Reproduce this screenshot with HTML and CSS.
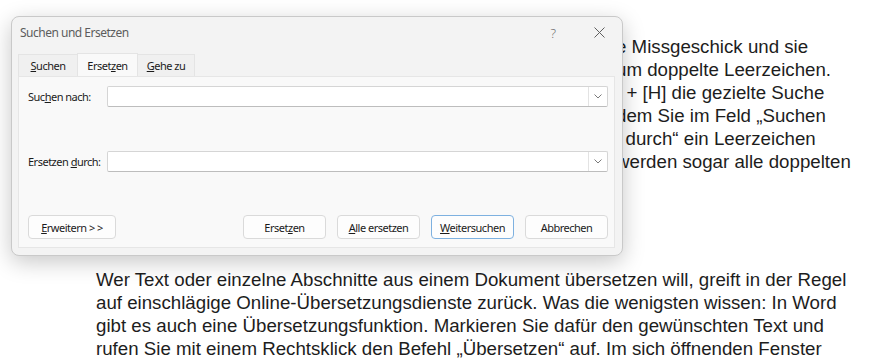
FILE: index.html
```html
<!DOCTYPE html>
<html lang="de">
<head>
    <meta charset="UTF-8">
    <meta name="viewport" content="width=device-width, initial-scale=1.0">
    <title>Suchen und Ersetzen</title>
    <link rel="stylesheet" href="styles.css">
</head>
<body>
    <!-- Dokument im Hintergrund -->
    <div class="doc">
        <p class="para para-top">
            <span class="line"><span class="cut">Wer viel tippt, kennt das ärgerlich</span>e Missgeschick und sie</span>
            <span class="line"><span class="cut">finden sich im ganzen Dokument, z</span>um doppelte Leerzeichen.</span>
            <span class="line"><span class="cut">Abhilfe schafft mit [Strg</span>] + [H] die gezielte Suche</span>
            <span class="line"><span class="cut">nach diesen Stellen, in</span>dem Sie im Feld „Suchen</span>
            <span class="line"><span class="cut cut-short">nach“ und im Feld „Ersetze</span>n durch“ ein Leerzeichen</span>
            <span class="line"><span class="cut">eingeben. So w</span>werden sogar alle doppelten</span>
        </p>
        <p class="para">
            Wer Text oder einzelne Abschnitte aus einem Dokument übersetzen will, greift in der Regel<br>
            auf einschlägige Online-Übersetzungsdienste zurück. Was die wenigsten wissen: In Word<br>
            gibt es auch eine Übersetzungsfunktion. Markieren Sie dafür den gewünschten Text und<br>
            rufen Sie mit einem Rechtsklick den Befehl „Übersetzen“ auf. Im sich öffnenden Fenster
        </p>
    </div>

    <!-- Dialog -->
    <div class="dialog">
        <div class="titlebar">
            <span class="title">Suchen und Ersetzen</span>
            <span class="tb-btn help">?</span>
            <span class="tb-btn close">
                <svg width="11" height="11" viewBox="0 0 11 11"><path d="M0.5 0.5 L10.5 10.5 M10.5 0.5 L0.5 10.5" stroke="#5f5f5f" stroke-width="1" fill="none"/></svg>
            </span>
        </div>

        <div class="tabs">
            <span class="tab"><u>S</u>uchen</span>
            <span class="tab active">Erset<u>z</u>en</span>
            <span class="tab"><u>G</u>ehe zu</span>
        </div>

        <div class="panel">
            <div class="field-row">
                <label class="field-label">Suc<u>h</u>en nach:</label>
                <div class="combo">
                    <span class="combo-arrow">
                        <svg width="8" height="5" viewBox="0 0 8 5"><path d="M0.5 0.5 L4 4 L7.5 0.5" stroke="#7a7a7a" stroke-width="1" fill="none"/></svg>
                    </span>
                </div>
            </div>
            <div class="field-row second">
                <label class="field-label">Ersetzen <u>d</u>urch:</label>
                <div class="combo">
                    <span class="combo-arrow">
                        <svg width="8" height="5" viewBox="0 0 8 5"><path d="M0.5 0.5 L4 4 L7.5 0.5" stroke="#7a7a7a" stroke-width="1" fill="none"/></svg>
                    </span>
                </div>
            </div>
            <div class="button-row">
                <button class="btn btn-more"><u>E</u>rweitern &gt; &gt;</button>
                <div class="btn-group">
                    <button class="btn">Erset<u>z</u>en</button>
                    <button class="btn"><u>A</u>lle ersetzen</button>
                    <button class="btn btn-default"><u>W</u>eitersuchen</button>
                    <button class="btn">Abbrechen</button>
                </div>
            </div>
        </div>
    </div>
</body>
</html>
```

FILE: styles.css
```css
body, html {
    margin: 0;
    padding: 0;
    width: 100%;
    height: 100%;
    background-color: #fff;
    overflow: hidden;
}

.doc {
    padding: 35px 0 0 96px;
    font-family: "Liberation Sans", Arial, sans-serif;
    font-size: 18.7px;
    line-height: 23px;
    color: #1d1d1d;
}
.para {
    margin: 0;
    white-space: nowrap;
}
.para-top {
    margin-bottom: 95px;
}
.line {
    display: block;
}
.cut {
    display: inline-block;
    vertical-align: top;
    width: 520px;
    overflow: hidden;
    text-align: right;
    color: transparent;
}
.cut-short { width: 514px; }

.dialog {
    position: absolute;
    left: 11px;
    top: 16px;
    width: 612px;
    height: 240px;
    box-sizing: border-box;
    background-color: #f3f3f3;
    border: 1px solid #c9c9c9;
    border-radius: 8px;
    box-shadow: 0 6px 22px rgba(0, 0, 0, 0.22);
    font-family: "Noto Sans", sans-serif;
    font-size: 11px;
    letter-spacing: -0.5px;
    color: #1b1b1b;
}

.titlebar {
    height: 31px;
    padding: 0 0 6px 8px;
    display: flex;
    align-items: center;
}
.title {
    flex: 1;
    font-size: 12px;
    color: #5c5c5c;
}
.tb-btn {
    width: 46px;
    text-align: center;
    color: #6a6a6a;
}
.help {
    font-size: 13px;
    font-weight: 300;
    padding-left: 3px;
}
.close {
    display: flex;
    justify-content: center;
    align-items: center;
}

.tabs {
    display: flex;
    margin-left: 6px;
    height: 22px;
    align-items: flex-end;
}
.tab {
    height: 22px;
    box-sizing: border-box;
    padding-top: 3px;
    text-align: center;
    background-color: #f0f0f0;
    border: 1px solid #e4e4e4;
    border-bottom: none;
}
.tab:nth-child(1) { width: 59px; border-right: none; }
.tab:nth-child(2) { width: 61px; }
.tab:nth-child(3) { width: 57px; border-left: none; }
.tab.active {
    height: 23px;
    background-color: #f9f9f9;
    padding-top: 4px;
}

.panel {
    margin: 0 7px 0 6px;
    height: 172px;
    box-sizing: border-box;
    background-color: #f9f9f9;
    border: 1px solid #e6e6e6;
    padding: 9px 6px 0 9px;
}

.field-row {
    display: flex;
    align-items: center;
    height: 21px;
}
.field-row.second {
    margin-top: 44px;
}
.field-label {
    width: 79px;
    white-space: nowrap;
}
.combo {
    flex: 1;
    height: 21px;
    box-sizing: border-box;
    background-color: #fff;
    border: 1px solid #d5d5d5;
    border-bottom-color: #bdbdbd;
    border-radius: 2px;
    display: flex;
    justify-content: flex-end;
}
.combo-arrow {
    width: 18px;
    border-left: 1px solid #e3e3e3;
    display: flex;
    justify-content: center;
    align-items: center;
}

.button-row {
    display: flex;
    margin-top: 43px;
}
.btn-group {
    margin-left: auto;
    display: flex;
    gap: 11px;
}
.btn {
    height: 24px;
    width: 83px;
    padding: 0;
    box-sizing: border-box;
    background-color: #fdfdfd;
    border: 1px solid #dadada;
    border-radius: 4px;
    font-family: "Noto Sans", sans-serif;
    font-size: 11px;
    letter-spacing: -0.5px;
    color: #1b1b1b;
}
.btn-more {
    width: 88px;
}
.btn-default {
    border-color: #7eb1e0;
}
```
